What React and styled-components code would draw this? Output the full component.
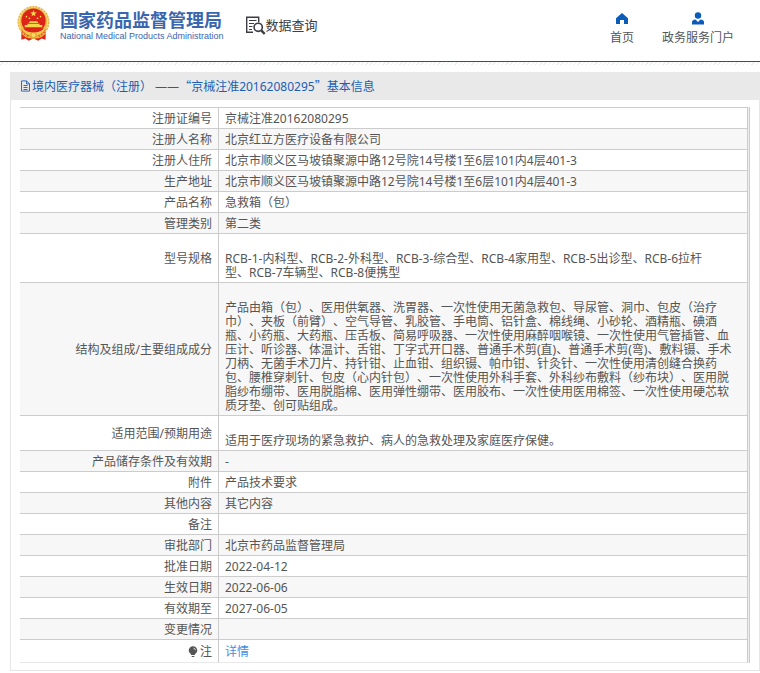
import React from 'react';
import styled, { createGlobalStyle } from 'styled-components';

const GlobalStyle = createGlobalStyle`
  body {
    margin: 0;
    background: #fff;
    color: #555;
    font-family: "Noto Sans", "Noto Sans CJK SC", sans-serif;
    font-size: 12px;
    line-height: 14px;
    text-spacing-trim: space-all;
  }
`;

const Header = styled.header`
  display: flex;
  align-items: flex-start;
  height: 61px;
  padding: 0 26px 0 17px;
  border-bottom: 1px solid #1d5590;
`;

const Brand = styled.a`
  display: flex;
  gap: 10px;
  padding-top: 6px;
  color: #3a66b0;
  text-decoration: none;
`;

const BrandText = styled.span`
  display: flex;
  flex-direction: column;
  padding-top: 3px;
  white-space: nowrap;
`;

const BrandName = styled.strong`
  font-family: "Noto Sans CJK SC", sans-serif;
  font-size: 18px;
  line-height: 20px;
`;

const BrandLatin = styled.span`
  font-family: "Liberation Sans", sans-serif;
  font-size: 9px;
  line-height: 14px;
`;

const Section = styled.h1`
  display: flex;
  align-items: center;
  margin: 15px 0 0 21px;
  color: #3c3c44;
  font-size: 13px;
  font-weight: 400;
  line-height: 20px;
  white-space: nowrap;
`;

const Nav = styled.nav`
  display: flex;
  gap: 28px;
  margin-left: auto;
  padding-top: 12px;
`;

const NavLink = styled.a`
  display: flex;
  flex-direction: column;
  align-items: center;
  gap: 6px;
  color: #555;
  text-decoration: none;
  white-space: nowrap;

  svg {
    fill: #0a5cb8;
  }
`;

const Hatch = styled.div`
  height: 3px;
  background: repeating-linear-gradient(135deg, #fff 0 2px, #eceff4 2px 3px);
`;

const Panel = styled.main`
  margin: 7px 0 2px 10px;
  border: 1px solid #e6e6e6;
  border-top: 0;
`;

const PanelTitle = styled.h2`
  display: flex;
  align-items: center;
  gap: 1px;
  height: 28px;
  margin: 0 -1px;
  padding: 0 10px;
  background: #e9e9e9;
  color: #1a5fb4;
  font-size: 12px;
  font-weight: 400;
`;

const Quote = styled.span`
  font-family: "Noto Sans CJK SC", sans-serif;
`;

const TableWrap = styled.div`
  margin: 7px 9px;
  padding-right: 1px;
  border-right: 1px solid #ccc;
  background: #eee;
`;

const Table = styled.table`
  width: 100%;
  table-layout: fixed;
  border-collapse: separate;
  border-spacing: 0;
  border-top: 1px solid #ccc;
  background: #fff;
`;

const Row = styled.tr`
  &:nth-child(even) {
    background: #f7f7f7;
  }

  &:last-child > * {
    height: 16px;
    border-bottom-color: #e8e8e8;
  }
`;

const Label = styled.th`
  width: 186px;
  height: 14px;
  padding: 4px 6px 2px;
  border-right: 1px solid #ccc;
  border-bottom: 1px solid #ccc;
  font-weight: 400;
  text-align: right;
`;

const Value = styled.td`
  height: 14px;
  padding: ${(props) => (props.$long ? '18px' : '4px')} 12px 2px 6px;
  border-right: 1px solid #ccc;
  border-bottom: 1px solid #ccc;
  white-space: pre-line;
`;

const DetailLink = styled.a`
  color: #3d8ee6;
  text-decoration: none;
`;

const NoteLabel = styled.span`
  display: flex;
  align-items: center;
  justify-content: flex-end;
  gap: 2px;
`;

const rows = [
  { label: '注册证编号', value: '京械注准20162080295' },
  { label: '注册人名称', value: '北京红立方医疗设备有限公司' },
  { label: '注册人住所', value: '北京市顺义区马坡镇聚源中路12号院14号楼1至6层101内4层401-3' },
  { label: '生产地址', value: '北京市顺义区马坡镇聚源中路12号院14号楼1至6层101内4层401-3' },
  { label: '产品名称', value: '急救箱（包）' },
  { label: '管理类别', value: '第二类' },
  {
    label: '型号规格',
    value: 'RCB-1-内科型、RCB-2-外科型、RCB-3-综合型、RCB-4家用型、RCB-5出诊型、RCB-6拉杆\n型、RCB-7车辆型、RCB-8便携型',
    long: true,
  },
  {
    label: '结构及组成/主要组成成分',
    value: '产品由箱（包）、医用供氧器、洗胃器、一次性使用无菌急救包、导尿管、洞巾、包皮（治疗巾）、夹板（前臂）、空气导管、乳胶管、手电筒、铝针盒、棉线绳、小砂轮、酒精瓶、碘酒瓶、小药瓶、大药瓶、压舌板、简易呼吸器、一次性使用麻醉咽喉镜、一次性使用气管插管、血压计、听诊器、体温计、舌钳、丁字式开口器、普通手术剪(直)、普通手术剪(弯)、敷料镊、手术刀柄、无菌手术刀片、持针钳、止血钳、组织镊、帕巾钳、针灸针、一次性使用清创缝合换药包、腰椎穿刺针、包皮（心内针包）、一次性使用外科手套、外科纱布敷料（纱布块）、医用脱脂纱布绷带、医用脱脂棉、医用弹性绷带、医用胶布、一次性使用医用棉签、一次性使用硬芯软质牙垫、创可贴组成。',
    long: true,
  },
  { label: '适用范围/预期用途', value: '适用于医疗现场的紧急救护、病人的急救处理及家庭医疗保健。', long: true },
  { label: '产品储存条件及有效期', value: '-' },
  { label: '附件', value: '产品技术要求' },
  { label: '其他内容', value: '其它内容' },
  { label: '备注', value: '' },
  { label: '审批部门', value: '北京市药品监督管理局' },
  { label: '批准日期', value: '2022-04-12' },
  { label: '生效日期', value: '2022-06-06' },
  { label: '有效期至', value: '2027-06-05' },
  { label: '变更情况', value: '' },
];

function Emblem() {
  return (
    <svg width="33" height="36" viewBox="0 0 98 106" aria-hidden="true">
      <path d="M13 68h72v32l-12-4-10 7-14-7-14 7-10-7-12 4z" fill="#d8261c" />
      <circle cx="49" cy="47" r="45" fill="none" stroke="#eab63f" strokeWidth="5" strokeDasharray="7 2" />
      <circle cx="49" cy="46" r="42" fill="#edbd45" />
      <circle cx="49" cy="43" r="36" fill="#dc2419" />
      <path d="m49 12 3 7h7l-6 4 2 7-6-4-6 4 2-7-6-4h7z" fill="#ffe04a" />
      <g fill="#ffe04a">
        <circle cx="28" cy="31" r="2.5" />
        <circle cx="37" cy="36" r="2.5" />
        <circle cx="61" cy="36" r="2.5" />
        <circle cx="70" cy="31" r="2.5" />
      </g>
      <path d="M38 45h22l3 5H35zM31 52h36v4h8v7H23v-7h8z" fill="#f8d64a" />
      <path d="M18 66h62l-6 10H24z" fill="#dc2419" />
      <path d="M18 66q14 13 31 13t31-13v8q-10 12-20 13l-6 10H44l-6-10q-10-1-20-13z" fill="#f2cb4b" />
      <circle cx="49" cy="86" r="8" fill="#f6d95b" stroke="#d8762a" strokeWidth="2" />
      <path d="M14 80q16 17 30 13M84 80q-16 17-30 13" fill="none" stroke="#f4ad33" strokeWidth="4" />
    </svg>
  );
}

function SearchDocIcon() {
  return (
    <svg width="21" height="20" viewBox="0 0 21 20" fill="none" stroke="#3c3c44" aria-hidden="true">
      <path d="M8 17.3H1.7V2.2h12v5" strokeWidth="1.4" />
      <path d="M4 5.5h7.5M4 8.5h5M4 11.5h3.5M4 14.5h3" />
      <circle cx="13.2" cy="12.3" r="4.1" strokeWidth="1.6" />
      <path d="m16.3 15.4 3.4 3.6" strokeWidth="2.4" />
    </svg>
  );
}

function DocIcon() {
  return (
    <svg width="11" height="12" viewBox="0 0 11 12" fill="none" stroke="#1a5fb4" aria-hidden="true">
      <path d="M1.5.9h5l3 3v7.2h-8zM6.5.9v3h3M3.5 5.5h4M3.5 7.5h4M3.5 9.5h4" strokeWidth=".9" />
    </svg>
  );
}

function BulbIcon() {
  return (
    <svg width="10" height="12" viewBox="0 0 10 12" aria-hidden="true">
      <path d="M5 .3a4.300 4.300 0 0 1 4.300 4.300c0 2-1.700 2.800-2.600 4.500H3.300C2.400 7.400.7 6.600.7 4.600A4.300 4.300 0 0 1 5 .3z" fill="#555" />
      <path d="M5.500 2.200q1.700.2 1.900 2" fill="none" stroke="#fff" strokeWidth=".8" />
      <path d="M3.700 10.500h2.600" stroke="#555" />
    </svg>
  );
}

function App() {
  return (
    <>
      <GlobalStyle />
      <Header>
        <Brand href="#">
          <Emblem />
          <BrandText>
            <BrandName>国家药品监督管理局</BrandName>
            <BrandLatin>National Medical Products Administration</BrandLatin>
          </BrandText>
        </Brand>
        <Section>
          <SearchDocIcon />
          数据查询
        </Section>
        <Nav>
          <NavLink href="#">
            <svg width="14" height="13" viewBox="0 0 14 13" aria-hidden="true">
              <path d="M7 1 13 6.300V12H9V8H5v4H1V6.300z" />
            </svg>
            首页
          </NavLink>
          <NavLink href="#">
            <svg width="14" height="13" viewBox="0 0 14 13" aria-hidden="true">
              <circle cx="7" cy="3.500" r="3.200" />
              <path d="M1 12.500V10q0-2 3.500-2.500L7 10l2.500-2.500Q13 8 13 10v2.500z" />
            </svg>
            政务服务门户
          </NavLink>
        </Nav>
      </Header>
      <Hatch />
      <Panel>
        <PanelTitle>
          <DocIcon />
          <span>
            境内医疗器械（注册） ——
            <Quote>“</Quote>
            京械注准20162080295
            <Quote>”</Quote>
            基本信息
          </span>
        </PanelTitle>
        <TableWrap>
          <Table>
            <tbody>
              {rows.map((row) => (
                <Row key={row.label}>
                  <Label scope="row">{row.label}</Label>
                  <Value $long={row.long}>{row.value}</Value>
                </Row>
              ))}
              <Row>
                <Label scope="row">
                  <NoteLabel>
                    <BulbIcon />
                    注
                  </NoteLabel>
                </Label>
                <Value><DetailLink href="#">详情</DetailLink></Value>
              </Row>
            </tbody>
          </Table>
        </TableWrap>
      </Panel>
    </>
  );
}

export default App;
